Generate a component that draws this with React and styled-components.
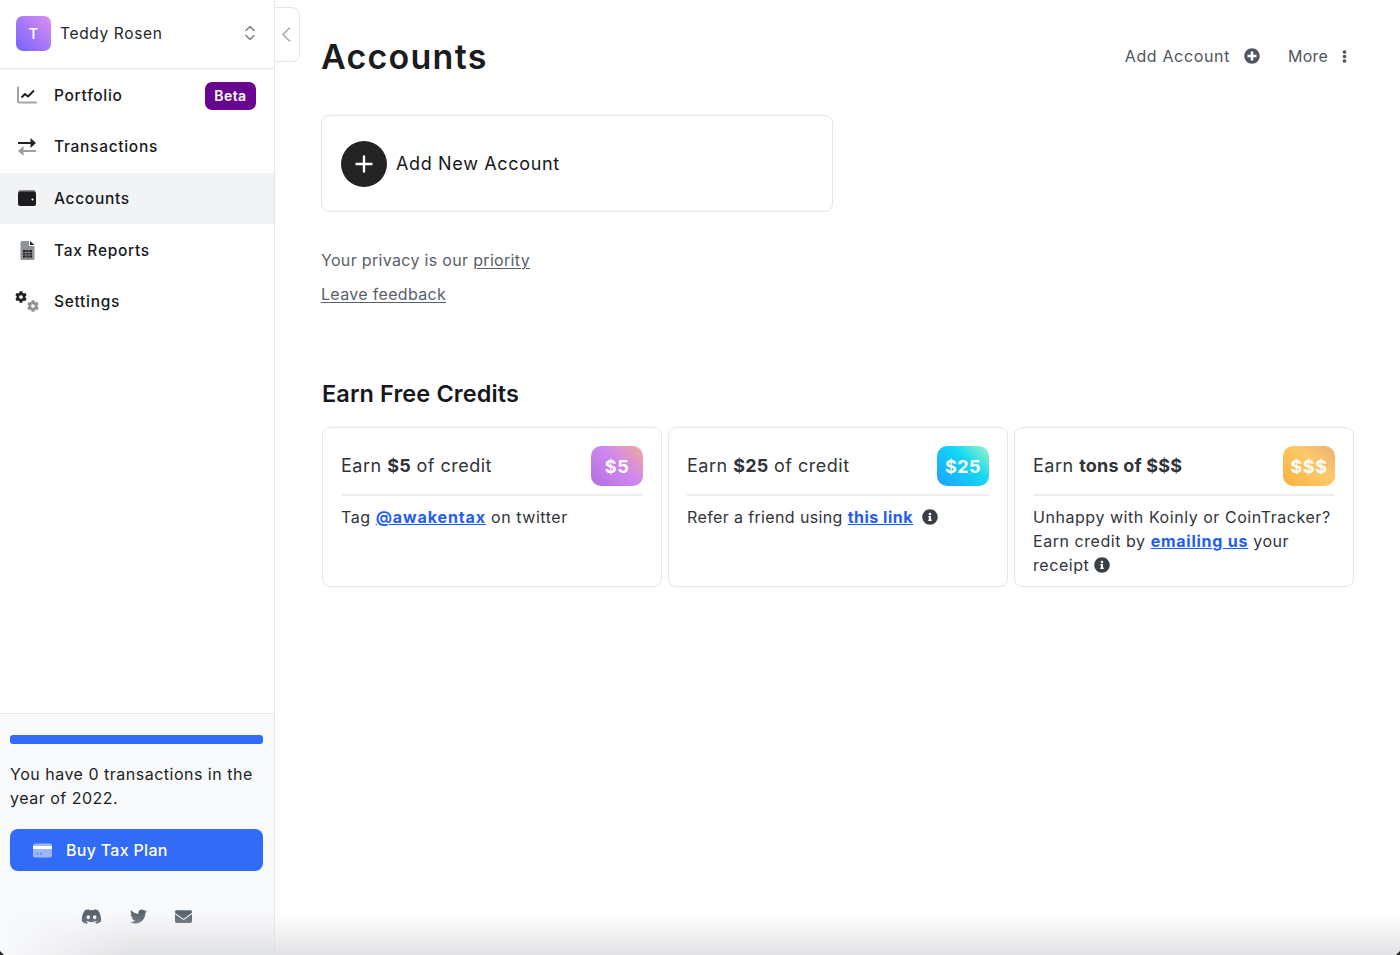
import React from 'react';
import styled, { createGlobalStyle } from 'styled-components';
import { FaCog, FaDiscord, FaTwitter, FaEnvelope, FaInfoCircle, FaPlusCircle, FaEllipsisV } from 'react-icons/fa';

const GlobalStyle = createGlobalStyle`
  html, body { margin: 0; padding: 0; height: 100%; background: #fff; }
  body { font-family: "Inter", "Open Sans", sans-serif; color: #16181c; overflow: hidden; }
  * { box-sizing: border-box; }
`;

const Page = styled.div`
  display: flex;
  position: relative;
  width: 1400px;
  height: 955px;
  overflow: hidden;
`;

const BottomFade = styled.div`
  position: absolute;
  left: 0;
  right: 0;
  bottom: 0;
  height: 42px;
  background: linear-gradient(to bottom, rgba(225,226,228,0), rgba(222,223,225,0.9));
  mask-image: linear-gradient(to right, transparent 10px, #000 130px);
  pointer-events: none;
`;

const WindowCorner = styled.div`
  position: absolute;
  bottom: 0;
  ${p => p.$side}: 0;
  width: 4px;
  height: 4px;
  background: #222;
  clip-path: ${p => (p.$side === 'left' ? 'polygon(0 0, 100% 100%, 0 100%)' : 'polygon(100% 0, 100% 100%, 0 100%)')};
`;

const Sidebar = styled.aside`
  width: 275px;
  flex: none;
  height: 100%;
  display: flex;
  flex-direction: column;
  border-right: 1px solid #e4e6e9;
`;

const UserRow = styled.div`
  height: 69px;
  flex: none;
  display: flex;
  align-items: center;
  padding: 0 18px 2px 16px;
  border-bottom: 1px solid #e4e6e9;
`;

const Avatar = styled.div`
  width: 35px;
  height: 35px;
  border-radius: 7px;
  background: linear-gradient(45deg, #7463ff, #dd8ff0);
  color: #fff;
  display: flex;
  align-items: center;
  justify-content: center;
  font-size: 15px;
  font-weight: 500;
`;

const UserName = styled.div`
  flex: 1;
  margin-left: 9px;
  font-size: 15.5px;
  letter-spacing: 0.65px;
  color: #23262b;
`;

const Nav = styled.nav`
  display: flex;
  flex-direction: column;
  flex: 1;
  padding-top: 0.25px;
`;

const NavItem = styled.div`
  height: 51.7px;
  display: flex;
  align-items: center;
  padding: 0 18px 0 15px;
  font-size: 15.5px;
  font-weight: 500;
  letter-spacing: 0.7px;
  color: #16181c;
  background: ${p => (p.$active ? '#f2f3f5' : 'transparent')};
`;

const NavIcon = styled.span`
  width: 24px;
  height: 24px;
  flex: none;
  margin-right: 15px;
  display: flex;
  align-items: center;
  justify-content: center;
`;

const NavLabel = styled.span`
  flex: 1;
`;

const Badge = styled.span`
  background: #69068f;
  color: #fff;
  font-size: 14px;
  font-weight: 600;
  margin-top: 2px;
  padding: 0 9.5px;
  height: 28px;
  line-height: 28px;
  border-radius: 7px;
  letter-spacing: 0.4px;
`;

const SideFooter = styled.div`
  height: 242px;
  flex: none;
  background: #f8f9fb;
  border-top: 1px solid #e6e8ea;
  padding: 21px 11px 0 10px;
`;

const Progress = styled.div`
  height: 9px;
  border-radius: 3px;
  background: #326bf6;
`;

const FooterText = styled.p`
  margin: 18px 0 19px;
  font-size: 16px;
  line-height: 24px;
  letter-spacing: 0.5px;
  color: #1c1f24;
`;

const BuyButton = styled.div`
  height: 42px;
  border-radius: 8px;
  background: #326bf6;
  color: #fff;
  display: flex;
  align-items: center;
  padding-left: 23px;
  gap: 14px;
  font-size: 16px;
  font-weight: 500;
  letter-spacing: 0.3px;
`;

const Socials = styled.div`
  display: flex;
  justify-content: center;
  align-items: center;
  gap: 28px;
  height: 21px;
  margin-top: 35px;
  padding-right: 0.5px;
  color: #5a636e;
  font-size: 17px;
`;

const DiscordIcon = styled(FaDiscord)`
  font-size: 21px;
  margin-right: -0.5px;
`;

const CollapseTab = styled.div`
  position: absolute;
  left: 275px;
  top: 7px;
  width: 25px;
  height: 55px;
  background: #fff;
  border: 1px solid #e4e6e9;
  border-left: none;
  border-radius: 0 8px 8px 0;
  display: flex;
  align-items: center;
  justify-content: center;
  padding-right: 2px;
`;

const Main = styled.main`
  flex: 1;
  padding: 0 46px 0 46px;
`;

const Header = styled.header`
  height: 115px;
  display: flex;
  align-items: flex-start;
  justify-content: space-between;
`;

const Title = styled.h1`
  margin: 36px 0 0;
  font-size: 34px;
  line-height: 42px;
  font-weight: 600;
  letter-spacing: 1.25px;
  color: #1a1c20;
`;

const HeaderActions = styled.div`
  margin-top: 45px;
  display: flex;
  align-items: center;
  padding-right: 3px;
  color: #4e5661;
  font-size: 16px;
  line-height: 22px;
`;

const HeaderAction = styled.span`
  display: flex;
  align-items: center;
  gap: ${p => p.$gap}px;
  margin-left: ${p => p.$left || 0}px;
  letter-spacing: ${p => p.$spacing}px;
`;

const AddCard = styled.div`
  width: 512px;
  height: 97px;
  border: 1.5px solid #e4e6e9;
  border-radius: 8px;
  display: flex;
  align-items: center;
  padding-left: 19px;
  gap: 9px;
  font-size: 18px;
  letter-spacing: 0.65px;
  color: #16181c;
`;

const PlusCircle = styled.span`
  width: 46px;
  height: 46px;
  border-radius: 50%;
  background: #242424;
  display: flex;
  align-items: center;
  justify-content: center;
`;

const Notes = styled.div`
  margin-top: 37px;
  display: flex;
  flex-direction: column;
  gap: 11px;
  color: #596069;
  font-size: 16px;
  line-height: 23px;
  letter-spacing: 0.32px;
`;

const NoteLink = styled.span`
  text-decoration: underline;
  text-underline-offset: 2px;
  text-decoration-thickness: 1px;
`;

const SectionTitle = styled.h2`
  margin: 72px 0 0 1px;
  font-size: 23.5px;
  line-height: 32px;
  font-weight: 600;
  letter-spacing: 0.1px;
  color: #16181c;
`;

const Cards = styled.div`
  margin: 17px 0 0 0.5px;
  display: grid;
  grid-template-columns: repeat(3, 340.5px);
  gap: 5.5px;
`;

const Card = styled.div`
  height: 160px;
  border: 1.5px solid #e4e6e9;
  border-radius: 8px;
  padding: 18px 18px 0 18.5px;
`;

const CardHead = styled.div`
  height: 50px;
  display: flex;
  align-items: flex-start;
  justify-content: space-between;
  border-bottom: 2px solid #eceef0;
`;

const CardTitle = styled.div`
  font-size: 18px;
  line-height: 40px;
  letter-spacing: 0.5px;
  color: #30343a;

  b { font-weight: 700; letter-spacing: 0.2px; }
`;

const Reward = styled.div`
  min-width: 52px;
  height: 40px;
  border-radius: 10px;
  background: ${p => p.$bg};
  color: #fff;
  font-size: 18px;
  font-weight: 700;
  letter-spacing: 0.5px;
  display: flex;
  align-items: center;
  justify-content: center;
`;

const CardBody = styled.div`
  margin-top: 9px;
  font-size: 16px;
  line-height: 24px;
  letter-spacing: ${p => p.$spacing}px;
  color: #30343a;
`;

const CardLink = styled.a`
  color: #1f5ef5;
  font-weight: 700;
  letter-spacing: ${p => p.$spacing}px;
  text-decoration: underline;
`;

const Info = styled(FaInfoCircle)`
  color: #3a3f45;
  font-size: 16px;
  vertical-align: -2px;
  margin-left: ${p => p.$left}px;
`;

const ChartIcon = () => (
  <svg width="20" height="18" viewBox="0 0 20 18">
    <path d="M1 1.5V15a1.5 1.5 0 0 0 1.5 1.5H19" fill="none" stroke="#a0a3a8" strokeWidth="2" strokeLinecap="round" />
    <path d="M4.5 11.5 8 8l3 2.5L17 4.5" fill="none" stroke="#222" strokeWidth="2" strokeLinejoin="round" />
  </svg>
);

const ArrowsIcon = () => (
  <svg width="20" height="20" viewBox="0 0 20 20">
    <path d="M1 6h14" stroke="#222" strokeWidth="2" />
    <path d="M13.5 1 19 6l-5.5 5z" fill="#222" />
    <path d="M19 14H5" stroke="#9b9ea3" strokeWidth="2" />
    <path d="M6.5 9 1 14l5.5 5z" fill="#9b9ea3" />
  </svg>
);

const WalletIcon = () => (
  <svg width="20" height="18" viewBox="0 0 20 18">
    <path d="M1 3.5C1 1.8 2 1 3.5 1H17c1 0 1.5.8 1.5 2.5z" fill="#8e9094" />
    <rect x="1" y="2.5" width="18" height="14.5" rx="2" fill="#1c1c1e" />
    <circle cx="15.5" cy="10.5" r="1.1" fill="#fff" />
  </svg>
);

const ReportIcon = () => (
  <svg width="15" height="19" viewBox="0 0 15 19">
    <path d="M2 0h7v5h5.5v12.5A1.5 1.5 0 0 1 13 19H2a1.5 1.5 0 0 1-1.5-1.5v-16A1.5 1.5 0 0 1 2 0z" fill="#8f9296" />
    <path d="M10 0l4.5 4H10z" fill="#222" />
    <path d="M3 9h9v7.5H3z" fill="#1f1f21" />
    <path d="M6 9v7.5M9 9v7.5M3 11.5h9M3 14h9" stroke="#8f9296" strokeWidth=".8" />
  </svg>
);

const CogsIcon = styled.span`
  position: relative;
  width: 24px;
  height: 22px;
  display: block;
  margin-left: -1px;
`;

const CogBig = styled(FaCog)`
  position: absolute;
  left: 0;
  top: 0;
  font-size: 12px;
  color: #222;
`;

const CogSmall = styled(FaCog)`
  position: absolute;
  left: 12px;
  top: 9px;
  font-size: 12px;
  color: #8f9296;
`;

const CardIcon = () => (
  <svg width="19" height="15" viewBox="0 0 19 15">
    <rect width="19" height="14" y=".5" rx="2" fill="#9db7fb" />
    <rect width="19" height="3" y="3" fill="#fff" />
    <path d="M3.5 10.8h2M7 10.8h2" stroke="#326bf6" strokeWidth="1" />
  </svg>
);

const Chevrons = () => (
  <svg width="12" height="16" viewBox="0 0 12 16" fill="none" stroke="#7d838a" strokeWidth="1.6" strokeLinecap="round" strokeLinejoin="round">
    <path d="M2 5.5 6 1.5l4 4M2 10.5l4 4 4-4" />
  </svg>
);

const BackChevron = () => (
  <svg width="10" height="15" viewBox="0 0 10 15" fill="none" stroke="#a4a9b0" strokeWidth="1.6" strokeLinecap="round" strokeLinejoin="round">
    <path d="M8.5 1 2 7.5 8.5 14" />
  </svg>
);

const PlusMark = () => (
  <svg width="18" height="18" viewBox="0 0 18 18" stroke="#fff" strokeWidth="2.4" strokeLinecap="round">
    <path d="M9 1.5v15M1.5 9h15" />
  </svg>
);

const navItems = [
  { label: 'Portfolio', icon: <ChartIcon />, badge: 'Beta' },
  { label: 'Transactions', icon: <ArrowsIcon /> },
  { label: 'Accounts', icon: <WalletIcon />, active: true },
  { label: 'Tax Reports', icon: <ReportIcon /> },
  { label: 'Settings', icon: <CogsIcon><CogBig /><CogSmall /></CogsIcon> },
];

const App = () => (
  <Page>
    <GlobalStyle />
    <Sidebar>
      <UserRow>
        <Avatar>T</Avatar>
        <UserName>Teddy Rosen</UserName>
        <Chevrons />
      </UserRow>
      <Nav>
        {navItems.map(item => (
          <NavItem key={item.label} $active={item.active}>
            <NavIcon>{item.icon}</NavIcon>
            <NavLabel>{item.label}</NavLabel>
            {item.badge && <Badge>{item.badge}</Badge>}
          </NavItem>
        ))}
      </Nav>
      <SideFooter>
        <Progress />
        <FooterText>You have 0 transactions in the year of 2022.</FooterText>
        <BuyButton><CardIcon />Buy Tax Plan</BuyButton>
        <Socials>
          <DiscordIcon />
          <FaTwitter />
          <FaEnvelope />
        </Socials>
      </SideFooter>
    </Sidebar>
    <CollapseTab><BackChevron /></CollapseTab>
    <Main>
      <Header>
        <Title>Accounts</Title>
        <HeaderActions>
          <HeaderAction $gap={14} $spacing={0.65}>Add Account <FaPlusCircle size={16} /></HeaderAction>
          <HeaderAction $gap={10} $left={28} $spacing={0.2}>More <FaEllipsisV size={13} /></HeaderAction>
        </HeaderActions>
      </Header>
      <AddCard>
        <PlusCircle><PlusMark /></PlusCircle>
        Add New Account
      </AddCard>
      <Notes>
        <div>Your privacy is our <NoteLink>priority</NoteLink></div>
        <div><NoteLink>Leave feedback</NoteLink></div>
      </Notes>
      <SectionTitle>Earn Free Credits</SectionTitle>
      <Cards>
        <Card>
          <CardHead>
            <CardTitle>Earn <b>$5</b> of credit</CardTitle>
            <Reward $bg="linear-gradient(45deg, #b26ee2, #cf88ee 55%, #f2aa9c)">$5</Reward>
          </CardHead>
          <CardBody $spacing={0.55}>Tag <CardLink $spacing={0.9}>@awakentax</CardLink> on twitter</CardBody>
        </Card>
        <Card>
          <CardHead>
            <CardTitle>Earn <b>$25</b> of credit</CardTitle>
            <Reward $bg="linear-gradient(45deg, #1ea0ff, #12d8f5 60%, #a0f5c8)">$25</Reward>
          </CardHead>
          <CardBody $spacing={0.37}>Refer a friend using <CardLink $spacing={0.5}>this link</CardLink><Info $left={9} /></CardBody>
        </Card>
        <Card>
          <CardHead>
            <CardTitle>Earn <b>tons of $$$</b></CardTitle>
            <Reward $bg="linear-gradient(45deg, #f8b23e, #fbc96a 60%, #eeae78)">$$$</Reward>
          </CardHead>
          <CardBody $spacing={0.55}>Unhappy with Koinly or CoinTracker? Earn credit by <CardLink $spacing={0.75}>emailing us</CardLink> your receipt<Info $left={5} /></CardBody>
        </Card>
      </Cards>
    </Main>
    <BottomFade />
    <WindowCorner $side="left" />
    <WindowCorner $side="right" />
  </Page>
);

export default App;
